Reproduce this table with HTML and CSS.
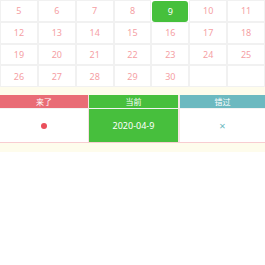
FILE: index.html
```html
<!DOCTYPE html>
<html>
<head>
<meta charset="utf-8">
<link rel="stylesheet" href="styles.css">
</head>
<body>
<div class="wrap">
  <div class="cal">
    <div class="day">5</div><div class="day">6</div><div class="day">7</div><div class="day">8</div><div class="day today">9</div><div class="day">10</div><div class="day">11</div>
    <div class="day">12</div><div class="day">13</div><div class="day">14</div><div class="day">15</div><div class="day">16</div><div class="day">17</div><div class="day">18</div>
    <div class="day">19</div><div class="day">20</div><div class="day">21</div><div class="day">22</div><div class="day">23</div><div class="day">24</div><div class="day">25</div>
    <div class="day">26</div><div class="day">27</div><div class="day">28</div><div class="day">29</div><div class="day">30</div><div class="day"></div><div class="day"></div>
  </div>
  <div class="legend">
    <div class="col came">
      <div class="head">来了</div>
      <div class="body"><span class="dot"></span></div>
    </div>
    <div class="col now">
      <div class="head">当前</div>
      <div class="body">2020-04-9</div>
    </div>
    <div class="col missed">
      <div class="head">错过</div>
      <div class="body"><span class="x">×</span></div>
    </div>
  </div>
</div>
</body>
</html>
```
FILE: styles.css
```css
html, body {
  margin: 0;
  padding: 0;
  background: #ffffff;
  font-family: "Noto Sans", "Noto Sans CJK SC", sans-serif;
}
.wrap {
  background: #fefcec;
  padding-bottom: 9px;
}
.cal {
  display: grid;
  grid-template-columns: repeat(7, 1fr);
  grid-auto-rows: 21.75px;
  background: #ffffff;
}
.day {
  box-sizing: border-box;
  border: 1px solid #f1f1f1;
  display: flex;
  align-items: center;
  justify-content: center;
  font-size: 9px;
  color: #f5a0a4;
}
.day.today {
  background: #46c03c;
  border: none;
  margin: 1px 1px 0 1px;
  border-radius: 3px;
  color: #ffffff;
}
.legend {
  margin-top: 8px;
  display: grid;
  grid-template-columns: 89px 91px 1fr;
  border-bottom: 1px solid #f8cdd1;
  background: #ffffff;
}
.col {
  display: flex;
  flex-direction: column;
}
.head {
  height: 13px;
  display: flex;
  align-items: center;
  justify-content: center;
  color: #ffffff;
  font-size: 8px;
  border-bottom: 1px solid #f3f3f3;
}
.body {
  height: 33px;
  display: flex;
  align-items: center;
  justify-content: center;
  font-size: 9px;
}
.came .head { background: #e96c76; }
.came { border-right: 1px solid #f8dfe1; }
.now .head { background: #47bf3d; }
.now .body { background: #47bf3d; color: #ffffff; }
.now { border-right: 2px solid #f8e6e8; }
.missed .head { background: #6cb9c0; }
.dot {
  width: 6px;
  height: 6px;
  border-radius: 50%;
  background: #ea4f5b;
}
.x {
  color: #6cb9c0;
  font-size: 11px;
}
```
